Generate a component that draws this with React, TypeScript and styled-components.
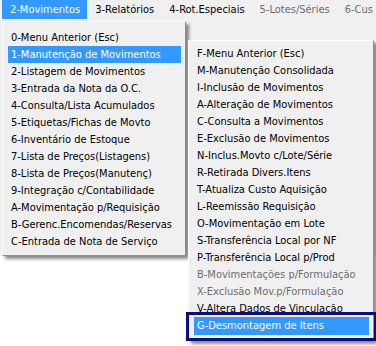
import { createGlobalStyle, styled } from "styled-components";

const Global = createGlobalStyle`
  html, body {
    margin: 0;
    padding: 0;
    background: #ffffff;
  }
  body {
    font-family: "DejaVu Sans Condensed", "DejaVu Sans", "Liberation Sans", sans-serif;
    font-size: 11px;
    color: #000;
  }
`;

const Screen = styled.div`
  width: 376px;
  height: 346px;
  overflow: hidden;
  background: linear-gradient(#f0f0f0 0 256px, #ffffff 256px);
`;

const MenuBar = styled.div`
  display: flex;
  height: 19px;
  padding-left: 2px;
  background: #f0f0f0;
  white-space: nowrap;
`;

const BarItem = styled.div<{ $active?: boolean; $disabled?: boolean }>`
  display: flex;
  align-items: center;
  padding: 0 7px 1px 8px;
  background: ${(p) => (p.$active ? "#3399ff" : "transparent")};
  color: ${(p) => (p.$active ? "#fff" : p.$disabled ? "#6d6d6d" : "#000")};
`;

const Dropdowns = styled.div`
  display: flex;
  align-items: flex-start;
`;

const Menu = styled.div<{ $offset: number; $width: number; $padTop: number }>`
  box-sizing: border-box;
  width: ${(p) => p.$width}px;
  margin-top: ${(p) => p.$offset}px;
  margin-left: 2px;
  padding: ${(p) => p.$padTop}px 4px 5px 5px;
  background: #f0f0f0;
  border-top: 1px solid #ffffff;
  border-left: 1px solid #ffffff;
  border-right: 1px solid #8f8f8f;
  border-bottom: 1px solid #8f8f8f;
  box-shadow: 3px 3px 3px rgba(0, 0, 0, 0.45);
  position: relative;
`;

const Item = styled.div<{ $selected?: boolean; $disabled?: boolean; $marked?: boolean }>`
  position: relative;
  height: 17px;
  line-height: 17px;
  padding-left: 3px;
  white-space: nowrap;
  background: ${(p) => (p.$selected ? "#3399ff" : "transparent")};
  color: ${(p) => (p.$selected ? "#fff" : p.$disabled ? "#6d6d6d" : "#000")};

  ${(p) =>
    p.$marked &&
    `
    height: 18px;
    line-height: 18px;
    &::after {
      content: "";
      position: absolute;
      left: -8px;
      right: -8px;
      top: -5px;
      bottom: -6px;
      border: 3px solid #0c0c7e;
    }
  `}
`;

const barItems = [
  { label: "2-Movimentos", active: true },
  { label: "3-Relatórios" },
  { label: "4-Rot.Especiais" },
  { label: "5-Lotes/Séries", disabled: true },
  { label: "6-Cus", disabled: true },
];

const mainItems = [
  "0-Menu Anterior (Esc)",
  "1-Manutenção de Movimentos",
  "2-Listagem de Movimentos",
  "3-Entrada da Nota da O.C.",
  "4-Consulta/Lista Acumulados",
  "5-Etiquetas/Fichas de Movto",
  "6-Inventário de Estoque",
  "7-Lista de Preços(Listagens)",
  "8-Lista de Preços(Manutenç)",
  "9-Integração c/Contabilidade",
  "A-Movimentação p/Requisição",
  "B-Gerenc.Encomendas/Reservas",
  "C-Entrada de Nota de Serviço",
];

const subItems = [
  { label: "F-Menu Anterior (Esc)" },
  { label: "M-Manutenção Consolidada" },
  { label: "I-Inclusão de Movimentos" },
  { label: "A-Alteração de Movimentos" },
  { label: "C-Consulta a Movimentos" },
  { label: "E-Exclusão de Movimentos" },
  { label: "N-Inclus.Movto c/Lote/Série" },
  { label: "R-Retirada Divers.Itens" },
  { label: "T-Atualiza Custo Aquisição" },
  { label: "L-Reemissão Requisição" },
  { label: "O-Movimentação em Lote" },
  { label: "S-Transferência Local por NF" },
  { label: "P-Transferência Local p/Prod" },
  { label: "B-Movimentações p/Formulação", disabled: true },
  { label: "X-Exclusão Mov.p/Formulação", disabled: true },
  { label: "V-Altera Dados de Vinculação" },
  { label: "G-Desmontagem de Itens", selected: true },
];

export default function App() {
  return (
    <>
      <Global />
      <Screen>
        <MenuBar>
          {barItems.map((b) => (
            <BarItem key={b.label} $active={b.active} $disabled={b.disabled}>
              {b.label}
            </BarItem>
          ))}
        </MenuBar>
        <Dropdowns>
          <Menu $offset={2} $width={184} $padTop={7}>
            {mainItems.map((label, i) => (
              <Item key={label} $selected={i === 1}>
                {label}
              </Item>
            ))}
          </Menu>
          <Menu $offset={21} $width={186} $padTop={4}>
            {subItems.map((s) => (
              <Item
                key={s.label}
                $selected={s.selected}
                $disabled={s.disabled}
                $marked={s.selected}
              >
                {s.label}
              </Item>
            ))}
          </Menu>
        </Dropdowns>
      </Screen>
    </>
  );
}
